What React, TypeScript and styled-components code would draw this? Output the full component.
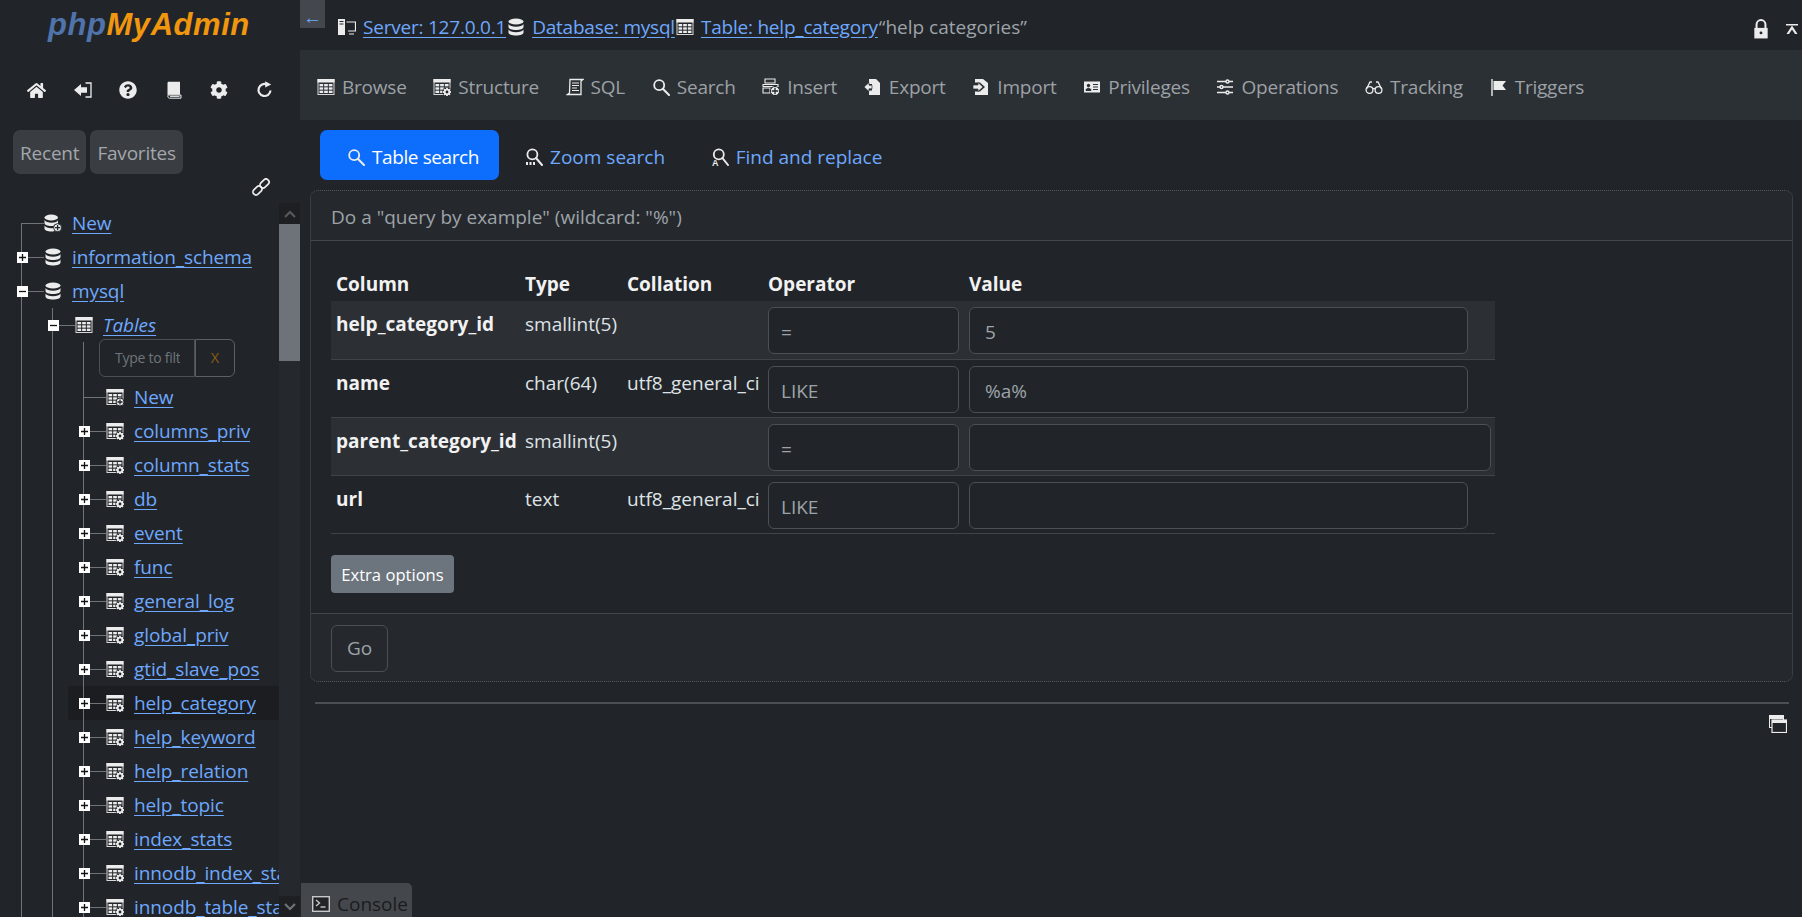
import React from "react";
import styled, { createGlobalStyle } from "styled-components";
import { FaHome, FaQuestionCircle, FaCog } from "react-icons/fa";

const Global = createGlobalStyle`
  html, body { margin: 0; padding: 0; height: 100%; background: #212529; overflow: hidden; }
  * { box-sizing: border-box; }
  body { font-family: "Open Sans", "Noto Sans", sans-serif; font-size: 19px; line-height: 30px; color: #dee2e6; }
`;

const W = "#ececec";
const Svg: React.FC<{ s?: number; vb?: string; children: React.ReactNode }> = ({ s = 18, vb = "0 0 18 18", children }) => (
  <svg width={s} height={s} viewBox={vb} style={{ flex: "none", display: "block" }}>{children}</svg>
);
const Grid = ({ x = 0.500, y = 1, w = 17, h = 16 }: { x?: number; y?: number; w?: number; h?: number }) => (
  <g>
    <rect x={x + 0.5} y={y + 0.5} width={w - 1} height={h - 1} fill="none" stroke="#d8d8d8" />
    <rect x={x} y={y} width={w} height={3.500} fill={W} />
    {[0, 1, 2].map(r => [0, 1, 2].map(c => (
      <rect key={`${r}${c}`} x={x + 2 + c * ((w - 3) / 3)} y={y + 5 + r * ((h - 6) / 3)} width={(w - 3) / 3 - 1} height={(h - 6) / 3 - 1} fill={W} />
    )))}
  </g>
);
const GearMark = ({ cx, cy, r = 3.800 }: { cx: number; cy: number; r?: number }) => (
  <g>
    <circle cx={cx} cy={cy} r={r + 1} fill="#212529" />
    <circle cx={cx} cy={cy} r={r * 0.62} fill="none" stroke={W} strokeWidth={r * 0.5} />
    {[0, 45, 90, 135, 180, 225, 270, 315].map(a => (
      <rect key={a} x={cx - 0.9} y={cy - r - 0.4} width={1.8} height={2.2} fill={W} transform={`rotate(${a} ${cx} ${cy})`} />
    ))}
  </g>
);
const PlusMark = ({ cx, cy, r = 4 }: { cx: number; cy: number; r?: number }) => (
  <g>
    <circle cx={cx} cy={cy} r={r} fill={W} stroke="#212529" strokeWidth="1" />
    <path d={`M${cx - r + 1.4} ${cy}H${cx + r - 1.4}M${cx} ${cy - r + 1.4}V${cy + r - 1.4}`} stroke="#212529" strokeWidth="1.300" />
  </g>
);
const Disks = ({ n = 3, w = 16 }: { n?: number; w?: number }) => (
  <g fill={W}>
    <ellipse cx={w / 2} cy={3.5} rx={w / 2 - 0.5} ry={3} />
    {n > 1 && <path d={`M.5 6c1 1.8 3.8 2.8 ${w / 2 - 0.5} 2.8s6.5-1 ${w / 2 - 0.5}-2.8V9c0 1.7-3.3 3-${w / 2 - 0.5} 3S.5 10.700.5 9z`} />}
    {n > 2 && <path d={`M.5 11.500c1 1.800 3.800 2.800 ${w / 2 - 0.5} 2.800s6.500-1 ${w / 2 - 0.5}-2.800V14.500c0 1.700-3.300 3-${w / 2 - 0.5} 3S.5 16.200.5 14.500z`} />}
  </g>
);
const Lens = ({ cx = 7.2, cy = 7.200, r = 5 }: { cx?: number; cy?: number; r?: number }) => (
  <g fill="none" stroke={W} strokeWidth="1.800">
    <circle cx={cx} cy={cy} r={r} />
    <path d={`M${cx + r * 0.72} ${cy + r * 0.72}L17 17`} strokeWidth="2" strokeLinecap="round" />
  </g>
);

const I = {
  Home: () => <FaHome size={19} color={W} />,
  Exit: () => <Svg><path d="M0 9l7-6V6.200h6v5.600H7V15z" fill={W} /><path d="M11.500 2h5.500v14h-5.500" fill="none" stroke={W} strokeWidth="1.300" /></Svg>,
  Help: () => <FaQuestionCircle size={18} color={W} />,
  Book: () => <Svg><path d="M3 .8h12v13H4.500c-1.200 0-2 .5-2 1.200V2z" fill={W} /><path d="M2.800 15c0-.8 1-1 2-1H16V17.200H4.500c-1 0-1.700-1-1.700-2.200zM5 15.400h9.500" fill="none" stroke={W} strokeWidth="1" /></Svg>,
  Gear: () => <FaCog size={18} color={W} />,
  Reload: () => <Svg><path d="M14.500 9.500a6 6 0 1 1-3.500-6" fill="none" stroke={W} strokeWidth="2.200" /><path d="M9.200.2l6 3.200-6 3.200z" fill={W} /></Svg>,
  Link: () => <Svg><g fill="none" stroke={W} strokeWidth="1.700" transform="rotate(-45 9 9)"><rect x="-1" y="6" width="10" height="6" rx="2.800" /><rect x="9" y="6" width="10" height="6" rx="2.800" /></g></Svg>,
  DbNew: () => <Svg><Disks n={3} w={14.500} /><PlusMark cx={13.600} cy={13.700} /></Svg>,
  Db: () => <Svg s={18} vb="-1 0 18 18"><Disks /></Svg>,
  Table: () => <Svg><Grid /></Svg>,
  TableNew: () => <Svg><Grid /><PlusMark cx={14} cy={14} /></Svg>,
  TableGear: () => <Svg><Grid /><GearMark cx={14} cy={14} /></Svg>,
  Server: () => <Svg><rect x="0" y="1" width="7" height="16" fill={W} /><path d="M1.500 3.500h4M1.500 6h4" stroke="#212529" /><path d="M8.500 4H17.500V13H10M11 16h5" fill="none" stroke={W} strokeWidth="1.200" /></Svg>,
  Sql: () => <Svg><path d="M4 1.500h13l-2 1.500V16.500H1.500l2-1.500z" fill="none" stroke={W} strokeWidth="1.300" /><path d="M6 5h7M6 7.500h7M6 10h5M6 12.500h7" stroke={W} strokeWidth="1.200" /></Svg>,
  Search: () => <Svg><Lens /></Svg>,
  ZoomS: () => <Svg><Lens cx={7.400} cy={6.400} r={5} /><path d="M1 14h2v3H1zM4.500 14h2v3h-2zM8 14h2v3H8z" fill={W} /></Svg>,
  Find: () => <Svg><Lens cx={7.800} cy={6.400} r={5} /><text x="1" y="17.500" fontSize="9" fontWeight="700" fill={W} fontFamily="Liberation Sans">A</text></Svg>,
  Insert: () => <Svg><path d="M3 1h10v4H3zM1 6.500h15v2H1zM1 10h7v5H1z" fill="none" stroke={W} strokeWidth="1.100" /><PlusMark cx={13} cy={13} r={4.600} /></Svg>,
  Export: () => <Svg><path d="M5 1h7l4 4v12H5v-4.500h3V6H5z" fill={W} /><path d="M0 9l5-4.500v2.700h3v3.600H5v2.700z" fill={W} stroke="#2b3035" strokeWidth=".7" /></Svg>,
  Import: () => <Svg><path d="M3 1h8l5 4v12H3v-3.500h5L13 9 8 4.500H3z" fill={W} /><path d="M1 7h5V4.500L11 9l-5 4.500V11H1z" fill={W} stroke="#2b3035" strokeWidth=".7" /></Svg>,
  Priv: () => <Svg><rect x="1" y="3.500" width="16" height="11" fill={W} /><circle cx="5.500" cy="7.500" r="1.700" fill="#2b3035" /><path d="M3 12.500c0-3 5-3 5 0zM10 6.500h5M10 9h5M10 11.500h5" fill="#2b3035" stroke="#2b3035" strokeWidth="1" /></Svg>,
  Ops: () => <Svg><g fill="none" stroke={W} strokeWidth="1.400"><path d="M1 3.500h9M13 3.500h4M1 9h3M7 9h10M1 14.500h9M13 14.500h4" /><circle cx="11.500" cy="3.500" r="1.500" /><circle cx="5.500" cy="9" r="1.500" /><circle cx="11.500" cy="14.500" r="1.500" /></g></Svg>,
  Track: () => <Svg><g fill="none" stroke={W} strokeWidth="1.300"><circle cx="4.500" cy="12" r="3.400" /><circle cx="13.500" cy="12" r="3.400" /><path d="M7.500 11c1-.8 2-.8 3 0M1.500 11L5 4h2M16.500 11L13 4h-2" /></g></Svg>,
  Flag: () => <Svg><path d="M2 1v17" stroke={W} strokeWidth="1.400" /><path d="M3.500 3H16l-3.500 4.500L16 12H3.500z" fill={W} /></Svg>,
  Lock: () => <Svg s={20}><path d="M5 8V5a4 4 0 0 1 8 0v3" fill="none" stroke={W} strokeWidth="1.800" /><path d="M3 8h12v9.500H3z" fill={W} /><circle cx="9" cy="12.500" r="1.300" fill="#212529" /></Svg>,
  Top: () => <Svg s={12} vb="0 0 12 12"><path d="M0 1h12v1.500H0z" fill={W} /><path d="M6 2.500l5.500 8.500H9L6 6.500 3 11H.5z" fill={W} /></Svg>,
  Win: () => <Svg><rect x=".5" y=".5" width="14" height="12" fill="#212529" stroke={W} /><rect x="1" y="1" width="13" height="3" fill={W} /><rect x="3" y="5" width="14.500" height="12.500" fill="#212529" stroke={W} strokeWidth="1.200" /><rect x="3" y="5" width="14.500" height="3" fill={W} /></Svg>,
  Term: () => <Svg><rect x=".7" y="1.700" width="16.600" height="14.600" fill="#212529" stroke="#c8c8c8" strokeWidth="1.400" /><path d="M4 5l3.500 3L4 11" fill="none" stroke="#c8c8c8" strokeWidth="1.400" /><path d="M8.500 12h5" stroke="#c8c8c8" strokeWidth="1.400" /></Svg>,
};

const Page = styled.div`display: flex; height: 100vh; overflow: hidden;`;
const Sidebar = styled.aside`width: 300px; flex: none; display: flex; flex-direction: column; height: 100%; background: #212529;`;
const Logo = styled.div`
  height: 60px; padding: 3px 0 0 48px; font: italic 700 31px/44px "Liberation Sans", sans-serif;
  letter-spacing: .55px; color: #f0960f; white-space: nowrap;
`;
const LogoPhp = styled.span`color: #4f73aa;`;
const SideIcons = styled.div`display: flex; height: 60px; align-items: center; gap: 27.500px; padding: 0 0 0 27px;`;
const Pills = styled.div`display: flex; gap: 4px; padding: 10px 0 0 13px; height: 54px; letter-spacing: -.2px;`;
const Pill = styled.span`
  background: #3a3d41; color: #a2a7ac; border-radius: 7px; padding: 1px 7px 0; height: 44px; display: flex; align-items: center;
`;
const LinkRow = styled.div`height: 29px; padding: 4px 0 0 252px;`;
const TreeWrap = styled.div`flex: 1; min-height: 0; display: flex; overflow: hidden;`;
const Tree = styled.div`width: 279px; flex: none; padding-top: 3px; overflow: hidden; letter-spacing: -.1px;`;
const Row = styled.div`display: flex; height: 34px; padding-left: 6px; white-space: nowrap;`;
const FilterRow = styled(Row)`height: 38px;`;
const Guide = styled.span`
  width: 31px; flex: none; background: linear-gradient(#707377, #707377) 15px 0 / 1px 100% no-repeat;
`;
const RowBody = styled.div<{ $hl?: boolean }>`
  display: flex; align-items: center; flex: 1; min-width: 0;
  background: ${p => (p.$hl ? "#1b1d21" : "transparent")};
`;
const Connector = styled.span<{ $from?: "mid" | "top" | "none" }>`
  width: 38px; flex: none; height: 100%; display: flex; align-items: center; padding-left: 11px;
  background:
    linear-gradient(#707377, #707377) 16px 50% / 22px 1px no-repeat
    ${p => (p.$from === "mid"
      ? ", linear-gradient(#707377, #707377) 15px 100% / 1px 50% no-repeat"
      : p.$from === "none"
        ? ""
        : ", linear-gradient(#707377, #707377) 15px 0 / 1px 100% no-repeat")};
`;
const Expander = styled.span`
  width: 11px; height: 11px; background: #fff; display: flex; align-items: center; justify-content: center; flex: none;
`;
const TreeIcon = styled.span`width: 28px; flex: none; display: flex;`;
const TreeLink = styled.a<{ $italic?: boolean }>`
  color: #6ea8fe; text-decoration: underline; text-underline-offset: 3px; font-style: ${p => (p.$italic ? "italic" : "normal")};
`;
const FilterBox = styled.div`display: flex; height: 38px; margin-top: -3px;`;
const FilterInput = styled.div`
  width: 96px; height: 38px; border: 1px solid #495057; border-radius: 6px 0 0 6px; padding: 0 15px;
  font-size: 14px; letter-spacing: -.25px; line-height: 36px; color: #6f757b; white-space: nowrap;
`;
const FilterClip = styled.div`overflow: hidden; width: 65px;`;
const FilterX = styled.div`
  width: 40px; height: 38px; border: 1px solid #5b6066; border-radius: 0 6px 6px 0; color: #8c5a14; font-size: 14.500px; line-height: 36px; text-align: center;
`;
const ScrollTrack = styled.div`width: 21px; flex: none; display: flex; flex-direction: column; background: #25282d;`;
const ScrollBtn = styled.div`height: 21px; background: #1d1f23; flex: none; display: flex; align-items: center; justify-content: center;`;
const ScrollThumb = styled.div`height: 137px; background: #6e7379; flex: none;`;
const ScrollRest = styled.div`flex: 1;`;

const Main = styled.main`flex: 1; min-width: 0; display: flex; flex-direction: column;`;
const TopBar = styled.div`height: 50px; flex: none; display: flex; white-space: nowrap;`;
const Collapse = styled.div`
  width: 25px; height: 28px; background: #44484e; color: #6ea8fe; text-align: center; line-height: 34px; font-size: 19px; flex: none;
`;
const Crumbs = styled.div`display: flex; align-items: center; flex: 1; padding: 3px 0 0 13px; height: 50px;`;
const Crumb = styled.a`color: #6ea8fe; text-decoration: underline; text-underline-offset: 3px; margin: 0 1px 0 7px; letter-spacing: -.22px;`;
const CrumbNote = styled.span`color: #9da3a8;`;
const TopRight = styled.div`display: flex; align-items: center; gap: 15px; padding: 8px 4px 0 0;`;
const Nav = styled.nav`height: 70px; flex: none; background: #2b3035; display: flex; align-items: center; gap: 26.700px; padding: 3px 0 0 17px; white-space: nowrap; letter-spacing: -.22px;`;
const NavItem = styled.a`display: flex; align-items: center; gap: 7px; color: #9da1a5;`;
const SubTabs = styled.div`display: flex; padding: 10px 0 0 20px; height: 70px; flex: none; white-space: nowrap;`;
const SubTab = styled.a<{ $on?: boolean }>`
  display: flex; align-items: center; gap: 7px; height: 50px; border-radius: 7px;
  padding: ${p => (p.$on ? "3px 20px 0 27px" : "3px 19.500px 0 26px")};
  letter-spacing: ${p => (p.$on ? "-.4px" : "0")};
  background: ${p => (p.$on ? "#0d6efd" : "transparent")}; color: ${p => (p.$on ? "#fff" : "#6ea8fe")};
`;
const Content = styled.div`padding: 0 9px 0 10px;`;
const Card = styled.section`border: 1px dotted #50555a; border-radius: 8px; background: #25292e;`;
const CardHead = styled.div`height: 50px; padding: 11px 17px 0 20px; color: #9da3a8; border-bottom: 1px solid #43484d; background: #25292e; border-radius: 8px 8px 0 0;`;
const CardBody = styled.div`padding: 20px; background: #212529;`;
const QTable = styled.table`border-collapse: collapse; table-layout: fixed; width: 1164px;`;
const Col = styled.col<{ $w: number }>`width: ${p => p.$w}px;`;
const Th = styled.th`
  padding: 7px 4px 2px; text-align: left; color: #f2f2f2; font-weight: 700; height: 40px;
  &:first-child { padding-left: 5px; }
`;
const Tr = styled.tr<{ $odd?: boolean }>`background: ${p => (p.$odd ? "#2c3035" : "transparent")}; border-bottom: 1px solid #3f4449; height: 58px;`;
const NameTd = styled.td`padding: 8px 0 0 5px; vertical-align: top; font-weight: 700; color: #f2f2f2; white-space: nowrap; letter-spacing: .03px;`;
const Td = styled.td`padding: 8px 4px 0; vertical-align: top; color: #dfe2e5; white-space: nowrap;`;
const FieldTd = styled.td`padding: 6px 4px 4px; vertical-align: top;`;
const Field = styled.div<{ $w: number; $pad: number }>`
  width: ${p => p.$w}px; height: 47px; border: 1px solid #495057; border-radius: 6px; background: #212529; color: #9da3a8;
  padding: 9px 16px 0 ${p => p.$pad}px;
`;
const ExtraBtn = styled.button`
  display: block; margin-top: 21px; width: 123px; height: 38px; background: #6c757d; border: 0; border-radius: 4px; color: #fff;
  font-family: inherit; font-size: 16.600px; padding: 2px 0 0;
`;
const CardFoot = styled.div`height: 68px; padding: 11px 20px; background: #25292e; border-top: 1px solid #43484d; border-radius: 0 0 8px 8px;`;
const GoBtn = styled.button`
  width: 57px; height: 47px; background: transparent; border: 1px solid #495057; border-radius: 6px; color: #9da3a8; font-family: inherit; font-size: 19px; padding: 0;
`;
const Rule = styled.hr`border: 0; height: 2px; background: #4a4f54; margin: 20px 4px 0 5px;`;
const WinRow = styled.div`display: flex; justify-content: flex-end; padding: 11px 6px 0 0;`;
const ConsoleTab = styled.div`
  position: absolute; left: 301px; bottom: 0; width: 111px; height: 34px; background: #44484d; border-radius: 0 5px 0 0;
  display: flex; align-items: center; gap: 7px; padding: 7px 0 0 11px; color: #1a1c20;
`;

const stats = [
  "columns_priv", "column_stats", "db", "event", "func", "general_log", "global_priv", "gtid_slave_pos",
  "help_category", "help_keyword", "help_relation", "help_topic", "index_stats", "innodb_index_stats", "innodb_table_stats",
];
const navs: [string, React.FC][] = [
  ["Browse", I.Table], ["Structure", I.TableGear], ["SQL", I.Sql], ["Search", I.Search], ["Insert", I.Insert], ["Export", I.Export],
  ["Import", I.Import], ["Privileges", I.Priv], ["Operations", I.Ops], ["Tracking", I.Track], ["Triggers", I.Flag],
];
const rows = [
  { name: "help_category_id", type: "smallint(5)", coll: "", op: "=", val: "5", w: 499 },
  { name: "name", type: "char(64)", coll: "utf8_general_ci", op: "LIKE", val: "%a%", w: 499 },
  { name: "parent_category_id", type: "smallint(5)", coll: "", op: "=", val: "", w: 522 },
  { name: "url", type: "text", coll: "utf8_general_ci", op: "LIKE", val: "", w: 499 },
];

const Box = ({ minus }: { minus?: boolean }) => (
  <Expander>
    <svg width="9" height="9" viewBox="0 0 9 9"><path d={minus ? "M1 4.500h7" : "M1 4.500h7M4.500 1v7"} stroke="#111" strokeWidth="1.300" /></svg>
  </Expander>
);

export default function App() {
  return (
    <Page>
      <Global />
      <Sidebar>
        <Logo><LogoPhp>php</LogoPhp>MyAdmin</Logo>
        <SideIcons><I.Home /><I.Exit /><I.Help /><I.Book /><I.Gear /><I.Reload /></SideIcons>
        <Pills><Pill>Recent</Pill><Pill>Favorites</Pill></Pills>
        <LinkRow><I.Link /></LinkRow>
        <TreeWrap>
          <Tree>
            <Row><RowBody><Connector $from="mid" /><TreeIcon><I.DbNew /></TreeIcon><TreeLink>New</TreeLink></RowBody></Row>
            <Row><RowBody><Connector><Box /></Connector><TreeIcon><I.Db /></TreeIcon><TreeLink>information_schema</TreeLink></RowBody></Row>
            <Row><RowBody><Connector><Box minus /></Connector><TreeIcon><I.Db /></TreeIcon><TreeLink>mysql</TreeLink></RowBody></Row>
            <Row><Guide /><RowBody><Connector><Box minus /></Connector><TreeIcon><I.Table /></TreeIcon><TreeLink $italic>Tables</TreeLink></RowBody></Row>
            <FilterRow><Guide /><Guide /><Guide /><FilterBox><FilterInput><FilterClip>Type to filter</FilterClip></FilterInput><FilterX>X</FilterX></FilterBox></FilterRow>
            <Row><Guide /><Guide /><RowBody><Connector /><TreeIcon><I.TableNew /></TreeIcon><TreeLink>New</TreeLink></RowBody></Row>
            {stats.map(t => (
              <Row key={t}><Guide /><Guide />
                <RowBody $hl={t === "help_category"}><Connector><Box /></Connector><TreeIcon><I.TableGear /></TreeIcon><TreeLink>{t}</TreeLink></RowBody>
              </Row>
            ))}
          </Tree>
          <ScrollTrack>
            <ScrollBtn><svg width="12" height="8" viewBox="0 0 12 8"><path d="M1 7l5-5 5 5" fill="none" stroke="#55585d" strokeWidth="2.200" /></svg></ScrollBtn>
            <ScrollThumb />
            <ScrollRest />
            <ScrollBtn><svg width="12" height="8" viewBox="0 0 12 8"><path d="M1 1l5 5 5-5" fill="none" stroke="#6e7277" strokeWidth="2.200" /></svg></ScrollBtn>
          </ScrollTrack>
        </TreeWrap>
      </Sidebar>
      <Main>
        <TopBar>
          <Collapse>←</Collapse>
          <Crumbs>
            <I.Server /><Crumb>Server: 127.0.0.1</Crumb>
            <I.Db /><Crumb>Database: mysql</Crumb>
            <I.Table /><Crumb>Table: help_category</Crumb>
            <CrumbNote>“help categories”</CrumbNote>
          </Crumbs>
          <TopRight><I.Lock /><I.Top /></TopRight>
        </TopBar>
        <Nav>
          {navs.map(([label, Ic]) => <NavItem key={label}><Ic />{label}</NavItem>)}
        </Nav>
        <SubTabs>
          <SubTab $on><I.Search />Table search</SubTab>
          <SubTab><I.ZoomS />Zoom search</SubTab>
          <SubTab><I.Find />Find and replace</SubTab>
        </SubTabs>
        <Content>
          <Card>
            <CardHead>Do a "query by example" (wildcard: "%")</CardHead>
            <CardBody>
              <QTable>
                <colgroup><Col $w={190} /><Col $w={102} /><Col $w={141} /><Col $w={201} /><Col $w={530} /></colgroup>
                <thead><tr><Th>Column</Th><Th>Type</Th><Th>Collation</Th><Th>Operator</Th><Th>Value</Th></tr></thead>
                <tbody>
                  {rows.map((r, i) => (
                    <Tr key={r.name} $odd={i % 2 === 0}>
                      <NameTd>{r.name}</NameTd><Td>{r.type}</Td><Td>{r.coll}</Td>
                      <FieldTd><Field $w={191} $pad={12}>{r.op}</Field></FieldTd>
                      <FieldTd><Field $w={r.w} $pad={15}>{r.val}</Field></FieldTd>
                    </Tr>
                  ))}
                </tbody>
              </QTable>
              <ExtraBtn>Extra options</ExtraBtn>
            </CardBody>
            <CardFoot><GoBtn>Go</GoBtn></CardFoot>
          </Card>
          <Rule />
          <WinRow><I.Win /></WinRow>
        </Content>
      </Main>
      <ConsoleTab><I.Term />Console</ConsoleTab>
    </Page>
  );
}
